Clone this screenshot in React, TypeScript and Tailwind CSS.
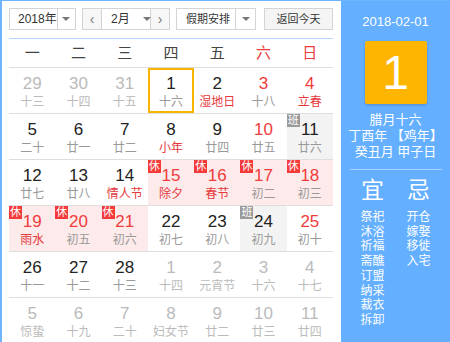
import React from "react";

type Cell = {
	n: string;
	lu: string;
	muted?: boolean;
	numRed?: boolean;
	luRed?: boolean;
	rest?: boolean;
	work?: boolean;
	sel?: boolean;
};

const weeks: Cell[][] = [
	[
		{ n: "29", lu: "十三", muted: true },
		{ n: "30", lu: "十四", muted: true },
		{ n: "31", lu: "十五", muted: true },
		{ n: "1", lu: "十六", sel: true },
		{ n: "2", lu: "湿地日", luRed: true },
		{ n: "3", lu: "十八", numRed: true },
		{ n: "4", lu: "立春", numRed: true, luRed: true },
	],
	[
		{ n: "5", lu: "二十" },
		{ n: "6", lu: "廿一" },
		{ n: "7", lu: "廿二" },
		{ n: "8", lu: "小年", luRed: true },
		{ n: "9", lu: "廿四" },
		{ n: "10", lu: "廿五", numRed: true },
		{ n: "11", lu: "廿六", work: true },
	],
	[
		{ n: "12", lu: "廿七" },
		{ n: "13", lu: "廿八" },
		{ n: "14", lu: "情人节", luRed: true },
		{ n: "15", lu: "除夕", numRed: true, luRed: true, rest: true },
		{ n: "16", lu: "春节", numRed: true, luRed: true, rest: true },
		{ n: "17", lu: "初二", numRed: true, rest: true },
		{ n: "18", lu: "初三", numRed: true, rest: true },
	],
	[
		{ n: "19", lu: "雨水", numRed: true, luRed: true, rest: true },
		{ n: "20", lu: "初五", numRed: true, rest: true },
		{ n: "21", lu: "初六", numRed: true, rest: true },
		{ n: "22", lu: "初七" },
		{ n: "23", lu: "初八" },
		{ n: "24", lu: "初九", work: true },
		{ n: "25", lu: "初十", numRed: true },
	],
	[
		{ n: "26", lu: "十一" },
		{ n: "27", lu: "十二" },
		{ n: "28", lu: "十三" },
		{ n: "1", lu: "十四", muted: true },
		{ n: "2", lu: "元宵节", muted: true },
		{ n: "3", lu: "十六", muted: true },
		{ n: "4", lu: "十七", muted: true },
	],
	[
		{ n: "5", lu: "惊蛰", muted: true },
		{ n: "6", lu: "十九", muted: true },
		{ n: "7", lu: "二十", muted: true },
		{ n: "8", lu: "妇女节", muted: true },
		{ n: "9", lu: "廿二", muted: true },
		{ n: "10", lu: "廿三", muted: true },
		{ n: "11", lu: "廿四", muted: true },
	],
];

const yi = ["祭祀", "沐浴", "祈福", "斋醮", "订盟", "纳采", "裁衣", "拆卸"];
const ji = ["开仓", "嫁娶", "移徙", "入宅"];

const Caret = () => (
	<span className="block w-0 h-0 border-x-[4px] border-x-transparent border-t-[4px] border-t-[#777]" />
);

const DayCell = ({ c }: { c: Cell }) => {
	const bg = c.rest ? "bg-[#fdeaea]" : c.work ? "bg-[#f3f3f3]" : "";
	const numColor = c.muted ? "text-[#bbb]" : c.numRed ? "text-[#f03c3c]" : "text-[#222]";
	const luColor = c.muted ? "text-[#bbb]" : c.luRed ? "text-[#e5393c]" : "text-[#999]";
	return (
		<div className={`relative flex flex-col items-center pt-[7px] h-[45px] ${bg} ${c.sel ? "ring-2 ring-inset ring-[#f8b500]" : ""}`}>
			{c.rest && (
				<span className="absolute left-0 top-0 w-[13px] h-[13px] bg-[#f43a3a] text-white text-[11px] leading-[13px] text-center">休</span>
			)}
			{c.work && (
				<span className="absolute left-0 top-0 w-[13px] h-[13px] bg-[#9a9a9a] text-white text-[11px] leading-[13px] text-center">班</span>
			)}
			<span className={`text-[17px] leading-[18px] ${numColor}`}>{c.n}</span>
			<span className={`mt-[2px] text-[12px] leading-[14px] ${luColor}`}>{c.lu}</span>
		</div>
	);
};

export default function App() {
	return (
		<div
			className="flex w-[450px] h-[342px] overflow-hidden bg-white border-t border-l-2 border-[#6fb4ff]"
			style={{ fontFamily: '"Liberation Sans", "Noto Sans CJK SC", sans-serif' }}
		>
			<div className="w-[339px] pl-[7px] pt-[7px] shrink-0">
				<div className="flex items-center gap-[6px] h-[22px] text-[12px] text-[#333] whitespace-nowrap">
					<div className="flex items-center w-[67px] h-full border border-[#d4d4d4]">
						<span className="flex-1 pl-[8px]">2018年</span>
						<span className="flex items-center justify-center w-[20px] h-full border-l border-[#d4d4d4]">
							<Caret />
						</span>
					</div>
					<div className="flex items-center w-[88px] h-full border border-[#d4d4d4]">
						<span className="flex items-center justify-center w-[19px] h-full bg-[#f7f7f7] text-[14px] text-[#777]">‹</span>
						<span className="flex items-center w-[50px] h-full border-x border-[#d4d4d4] pl-[9px] gap-[13px]">
							2月
							<Caret />
						</span>
						<span className="flex items-center justify-center w-[19px] h-full bg-[#f7f7f7] text-[14px] text-[#777]">›</span>
					</div>
					<div className="flex items-center w-[80px] h-full border border-[#d4d4d4]">
						<span className="flex-1 pl-[9px] text-[11px]">假期安排</span>
						<span className="flex items-center justify-center w-[20px] h-full border-l border-[#d4d4d4] shrink-0">
							<Caret />
						</span>
					</div>
					<div className="flex items-center justify-center w-[69px] h-full ml-[2px] border border-[#d4d4d4] bg-[#f5f5f5] text-[11px]">
						返回今天
					</div>
				</div>
				<div className="w-[324px] mt-[8px] border-t border-[#b5d8ff]">
					<div className="grid grid-cols-7 h-[28px] items-center text-[15px] text-center text-[#444]">
						<span>一</span>
						<span>二</span>
						<span>三</span>
						<span>四</span>
						<span>五</span>
						<span className="text-[#f03c3c]">六</span>
						<span className="text-[#f03c3c]">日</span>
					</div>
					{weeks.map((w, i) => (
						<div key={i} className="grid grid-cols-7 border-t border-[#dedede]">
							{w.map((c, j) => (
								<DayCell key={j} c={c} />
							))}
						</div>
					))}
				</div>
			</div>
			<div className="flex-1 flex flex-col items-center bg-[#64afff] text-white pt-[13px]">
				<div className="text-[13px] leading-[15px]">2018-02-01</div>
				<div className="mt-[12px] flex items-center justify-center w-[62px] h-[63px] rounded-[2px] bg-[#fdb500] shadow-[0_1px_3px_rgba(0,0,0,0.2)] text-[48px] font-light">
					1
				</div>
				<div className="mt-[8px] text-[13px] leading-[16px] text-center">
					<div>腊月十六</div>
					<div>丁酉年 【鸡年】</div>
					<div>癸丑月 甲子日</div>
				</div>
				<div className="mt-[9px] w-[92px] h-px bg-[#a9d1ff]" />
				<div className="mt-[7px] grid grid-cols-2 w-[92px] text-center">
					<div className="flex flex-col items-center">
						<span className="text-[23px] leading-[26px]">宜</span>
						<div className="mt-[7px] text-[12px] leading-[14.7px]">
							{yi.map((t) => (
								<div key={t}>{t}</div>
							))}
						</div>
					</div>
					<div className="flex flex-col items-center">
						<span className="text-[23px] leading-[26px]">忌</span>
						<div className="mt-[7px] text-[12px] leading-[14.7px]">
							{ji.map((t) => (
								<div key={t}>{t}</div>
							))}
						</div>
					</div>
				</div>
			</div>
		</div>
	);
}
